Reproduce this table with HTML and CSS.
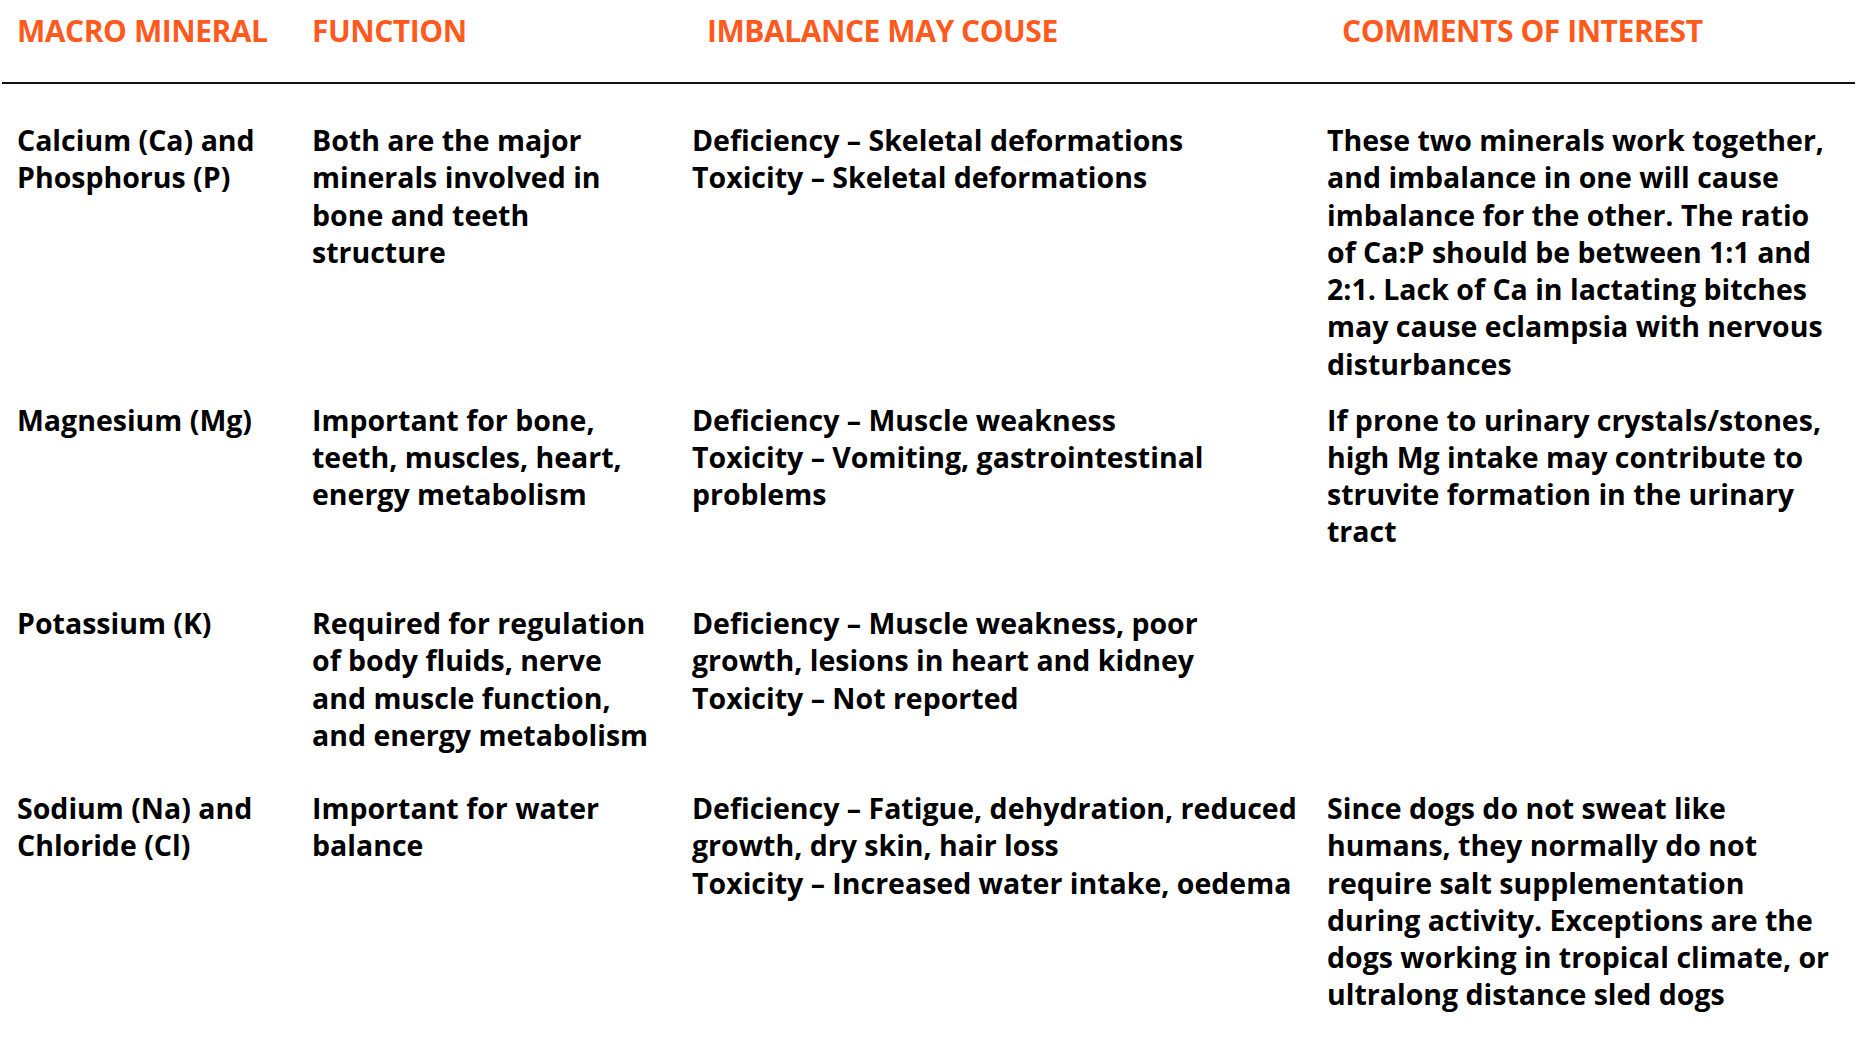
FILE: index.html
```html
<!DOCTYPE html>
<html lang="en">
<head>
<meta charset="utf-8">
<title>Macro minerals</title>
<link rel="stylesheet" href="styles.css">
</head>
<body>
<div class="table">
  <div class="head">
    <div class="hcell">MACRO MINERAL</div>
    <div class="hcell">FUNCTION</div>
    <div class="hcell indent">IMBALANCE MAY COUSE</div>
    <div class="hcell indent">COMMENTS OF INTEREST</div>
  </div>
  <div class="row row-1">
    <div class="cell">Calcium (Ca) and<br>Phosphorus (P)</div>
    <div class="cell">Both are the major<br>minerals involved in<br>bone and teeth<br>structure</div>
    <div class="cell">Deficiency – Skeletal deformations<br>Toxicity – Skeletal deformations</div>
    <div class="cell">These two minerals work together,<br>and imbalance in one will cause<br>imbalance for the other. The ratio<br>of Ca:P should be between 1:1 and<br>2:1. Lack of Ca in lactating bitches<br>may cause eclampsia with nervous<br>disturbances</div>
  </div>
  <div class="row row-2">
    <div class="cell">Magnesium (Mg)</div>
    <div class="cell">Important for bone,<br>teeth, muscles, heart,<br>energy metabolism</div>
    <div class="cell">Deficiency – Muscle weakness<br>Toxicity – Vomiting, gastrointestinal<br>problems</div>
    <div class="cell">If prone to urinary crystals/stones,<br>high Mg intake may contribute to<br>struvite formation in the urinary<br>tract</div>
  </div>
  <div class="row row-3">
    <div class="cell">Potassium (K)</div>
    <div class="cell">Required for regulation<br>of body fluids, nerve<br>and muscle function,<br>and energy metabolism</div>
    <div class="cell">Deficiency – Muscle weakness, poor<br>growth, lesions in heart and kidney<br>Toxicity – Not reported</div>
    <div class="cell"></div>
  </div>
  <div class="row row-4">
    <div class="cell">Sodium (Na) and<br>Chloride (Cl)</div>
    <div class="cell">Important for water<br>balance</div>
    <div class="cell">Deficiency – Fatigue, dehydration, reduced<br>growth, dry skin, hair loss<br>Toxicity – Increased water intake, oedema</div>
    <div class="cell">Since dogs do not sweat like<br>humans, they normally do not<br>require salt supplementation<br>during activity. Exceptions are the<br>dogs working in tropical climate, or<br>ultralong distance sled dogs</div>
  </div>
</div>
</body>
</html>
```
FILE: styles.css
```css
html, body {
  margin: 0;
  padding: 0;
  background: #ffffff;
}

body {
  font-family: "Open Sans", "Noto Sans", sans-serif;
  font-weight: 700;
  color: #000000;
}

.table {
  width: 1858px;
}

.head,
.row {
  display: grid;
  grid-template-columns: 295px 380px 635px 1fr;
  padding-left: 17px;
}

.head {
  margin: 0 3px 0 2px;
  padding-left: 15px;
  padding-top: 11px;
  height: 71px;
  border-bottom: 2px solid #111111;
}

.hcell {
  font-size: 30px;
  line-height: 40px;
  color: #ff5a1e;
  letter-spacing: -0.45px;
  white-space: nowrap;
}

.hcell.indent {
  padding-left: 15px;
}

.row {
  box-sizing: border-box;
}

.cell {
  font-size: 28.5px;
  line-height: 37.3px;
  letter-spacing: 0;
  white-space: nowrap;
}

.row-1 {
  margin-top: 38px;
  height: 279.5px;
}

.row-2 {
  height: 203.5px;
}

.row-3 {
  height: 185px;
}
```
